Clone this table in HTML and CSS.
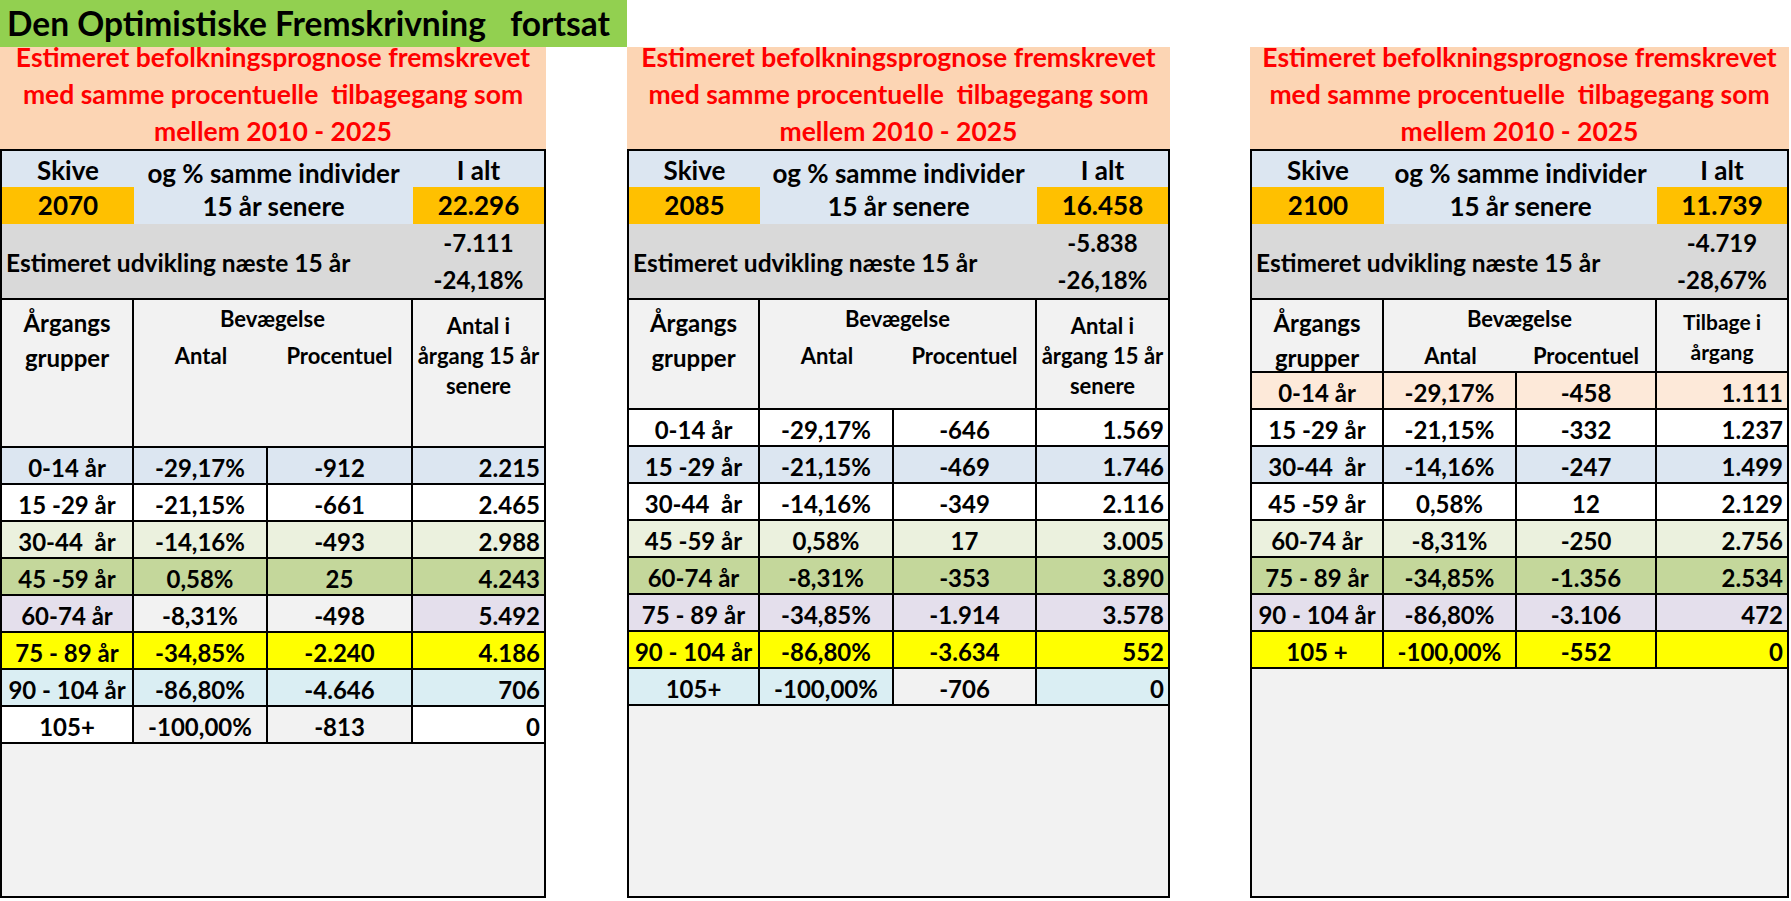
FILE: index.html
```html
<!DOCTYPE html>
<html lang="da">
<head>
<meta charset="utf-8">
<title>Den Optimistiske Fremskrivning fortsat</title>
<link rel="stylesheet" href="styles.css">
</head>
<body>
<div class="page">
  <div class="title-bar">Den Optimistiske Fremskrivning   fortsat</div>
  <div class="panels">

    <section class="panel p1">
      <div class="banner"><div class="banner-text">Estimeret befolkningsprognose fremskrevet<br>med samme procentuelle  tilbagegang som<br>mellem 2010 - 2025</div></div>
      <div class="sheet">
        <div class="top">
          <div class="t-cell">Skive</div>
          <div class="t-mid">og % samme individer<br>15 år senere</div>
          <div class="t-cell">I alt</div>
          <div class="t-cell orange">2070</div>
          <div class="t-cell orange">22.296</div>
        </div>
        <div class="dev">
          <div class="dev-label">Estimeret udvikling næste 15 år</div>
          <div class="dev-vals">-7.111<br>-24,18%</div>
        </div>
        <div class="grid">
          <div class="h h-group">Årgangs<br>grupper</div>
          <div class="h h-move"><div class="h-lbl">Bevægelse</div><div class="h-sub">Antal</div><div class="h-sub">Procentuel</div></div>
          <div class="h h-total">Antal i<br>årgang 15 år<br>senere</div>

          <div class="row bg-blue"><div class="c">0-14 år</div><div class="c">-29,17%</div><div class="c">-912</div><div class="c num">2.215</div></div>
          <div class="row bg-white"><div class="c">15 -29 år</div><div class="c">-21,15%</div><div class="c">-661</div><div class="c num">2.465</div></div>
          <div class="row bg-lgreen"><div class="c">30-44  år</div><div class="c">-14,16%</div><div class="c">-493</div><div class="c num">2.988</div></div>
          <div class="row bg-green"><div class="c">45 -59 år</div><div class="c">0,58%</div><div class="c">25</div><div class="c num">4.243</div></div>
          <div class="row bg-lav"><div class="c">60-74 år</div><div class="c gry">-8,31%</div><div class="c gry">-498</div><div class="c num">5.492</div></div>
          <div class="row bg-yellow"><div class="c">75 - 89 år</div><div class="c">-34,85%</div><div class="c">-2.240</div><div class="c num">4.186</div></div>
          <div class="row bg-aqua"><div class="c">90 - 104 år</div><div class="c">-86,80%</div><div class="c">-4.646</div><div class="c num">706</div></div>
          <div class="row bg-white"><div class="c">105+</div><div class="c gry">-100,00%</div><div class="c gry">-813</div><div class="c num">0</div></div>
        </div>
      </div>
    </section>

    <section class="panel p2">
      <div class="banner"><div class="banner-text">Estimeret befolkningsprognose fremskrevet<br>med samme procentuelle  tilbagegang som<br>mellem 2010 - 2025</div></div>
      <div class="sheet">
        <div class="top">
          <div class="t-cell">Skive</div>
          <div class="t-mid">og % samme individer<br>15 år senere</div>
          <div class="t-cell">I alt</div>
          <div class="t-cell orange">2085</div>
          <div class="t-cell orange">16.458</div>
        </div>
        <div class="dev">
          <div class="dev-label">Estimeret udvikling næste 15 år</div>
          <div class="dev-vals">-5.838<br>-26,18%</div>
        </div>
        <div class="grid">
          <div class="h h-group">Årgangs<br>grupper</div>
          <div class="h h-move"><div class="h-lbl">Bevægelse</div><div class="h-sub">Antal</div><div class="h-sub">Procentuel</div></div>
          <div class="h h-total">Antal i<br>årgang 15 år<br>senere</div>

          <div class="row bg-white"><div class="c">0-14 år</div><div class="c">-29,17%</div><div class="c">-646</div><div class="c num">1.569</div></div>
          <div class="row bg-blue"><div class="c">15 -29 år</div><div class="c">-21,15%</div><div class="c">-469</div><div class="c num">1.746</div></div>
          <div class="row bg-white"><div class="c">30-44  år</div><div class="c">-14,16%</div><div class="c">-349</div><div class="c num">2.116</div></div>
          <div class="row bg-lgreen"><div class="c">45 -59 år</div><div class="c">0,58%</div><div class="c">17</div><div class="c num">3.005</div></div>
          <div class="row bg-green"><div class="c">60-74 år</div><div class="c">-8,31%</div><div class="c">-353</div><div class="c num">3.890</div></div>
          <div class="row bg-lav"><div class="c">75 - 89 år</div><div class="c">-34,85%</div><div class="c">-1.914</div><div class="c num">3.578</div></div>
          <div class="row bg-yellow"><div class="c">90 - 104 år</div><div class="c">-86,80%</div><div class="c">-3.634</div><div class="c num">552</div></div>
          <div class="row bg-aqua"><div class="c">105+</div><div class="c">-100,00%</div><div class="c gry">-706</div><div class="c num">0</div></div>
        </div>
      </div>
    </section>

    <section class="panel p3">
      <div class="banner"><div class="banner-text">Estimeret befolkningsprognose fremskrevet<br>med samme procentuelle  tilbagegang som<br>mellem 2010 - 2025</div></div>
      <div class="sheet">
        <div class="top">
          <div class="t-cell">Skive</div>
          <div class="t-mid">og % samme individer<br>15 år senere</div>
          <div class="t-cell">I alt</div>
          <div class="t-cell orange">2100</div>
          <div class="t-cell orange">11.739</div>
        </div>
        <div class="dev">
          <div class="dev-label">Estimeret udvikling næste 15 år</div>
          <div class="dev-vals">-4.719<br>-28,67%</div>
        </div>
        <div class="grid">
          <div class="h h-group">Årgangs<br>grupper</div>
          <div class="h h-move"><div class="h-lbl">Bevægelse</div><div class="h-sub">Antal</div><div class="h-sub">Procentuel</div></div>
          <div class="h h-total h-short">Tilbage i<br>årgang</div>

          <div class="row bg-peach"><div class="c">0-14 år</div><div class="c">-29,17%</div><div class="c">-458</div><div class="c num">1.111</div></div>
          <div class="row bg-white"><div class="c">15 -29 år</div><div class="c">-21,15%</div><div class="c">-332</div><div class="c num">1.237</div></div>
          <div class="row bg-blue"><div class="c">30-44  år</div><div class="c">-14,16%</div><div class="c">-247</div><div class="c num">1.499</div></div>
          <div class="row bg-white"><div class="c">45 -59 år</div><div class="c">0,58%</div><div class="c">12</div><div class="c num">2.129</div></div>
          <div class="row bg-lgreen"><div class="c">60-74 år</div><div class="c">-8,31%</div><div class="c">-250</div><div class="c num">2.756</div></div>
          <div class="row bg-green"><div class="c">75 - 89 år</div><div class="c">-34,85%</div><div class="c">-1.356</div><div class="c num">2.534</div></div>
          <div class="row bg-lav"><div class="c">90 - 104 år</div><div class="c">-86,80%</div><div class="c">-3.106</div><div class="c num">472</div></div>
          <div class="row bg-yellow"><div class="c">105 +</div><div class="c">-100,00%</div><div class="c">-552</div><div class="c num">0</div></div>
        </div>
      </div>
    </section>

  </div>
</div>
</body>
</html>
```

FILE: styles.css
```css
html, body {
  margin: 0;
  padding: 0;
  background: #ffffff;
}

body {
  font-family: Lato, "Open Sans", "Liberation Sans", sans-serif;
  font-weight: 700;
  color: #000000;
}

.page {
  width: 1791px;
}

.title-bar {
  width: 627px;
  height: 47px;
  box-sizing: border-box;
  padding-left: 7px;
  background: #92D050;
  font-size: 33.5px;
  line-height: 47px;
  white-space: pre;
}

.panels {
  display: flex;
  align-items: flex-start;
  gap: 80px;
}

.panel {
  display: flex;
  flex-direction: column;
  width: var(--w);
}

.p1 { --w: 546px; --c1: 132px; --c2: 134px; --c3: 145px; --hh: 148px; }
.p2 { --w: 543px; --c1: 131px; --c2: 134px; --c3: 143px; --hh: 110px; margin-left: 1px; }
.p3 { --w: 539px; --c1: 132px; --c2: 133px; --c3: 140px; --hh: 73px; }

/* red banner */
.banner {
  height: 102px;
  display: flex;
  flex-direction: column;
  align-items: center;
  background: #FCD5B4;
  color: #FF0000;
  font-size: 26.5px;
  line-height: 37px;
  text-align: center;
  white-space: pre;
}

.banner-text {
  margin-top: -8px;
}

/* sheet */
.sheet {
  height: 749px;
  box-sizing: border-box;
  border: 2px solid #000000;
  background: #F2F2F2;
  display: flex;
  flex-direction: column;
  font-size: 24px;
}

.top {
  display: grid;
  grid-template-columns: var(--c1) calc(var(--c2) + var(--c3)) 1fr;
  grid-template-rows: 36px 37px;
  background: #DCE6F1;
  font-size: 26px;
}

.t-cell {
  text-align: center;
  line-height: 36px;
  padding-top: 1px;
  box-sizing: border-box;
}

.t-cell.orange {
  background: #FFC000;
  line-height: 37px;
  padding-top: 0;
}

.t-mid {
  grid-row: 1 / span 2;
  grid-column: 2;
  text-align: center;
  line-height: 33px;
  padding-top: 6px;
}

.dev {
  height: 74px;
  display: grid;
  grid-template-columns: calc(var(--c1) + var(--c2) + var(--c3)) 1fr;
  background: #D9D9D9;
}

.dev-label {
  align-self: center;
  padding-left: 4px;
  padding-top: 3px;
  font-size: 24.5px;
  white-space: nowrap;
}

.dev-vals {
  text-align: center;
  line-height: 37px;
}

/* data grid */
.grid {
  display: grid;
  grid-template-columns: var(--c1) var(--c2) var(--c3) 1fr;
  border-top: 2px solid #000000;
}

.h {
  height: var(--hh);
  box-sizing: border-box;
  background: #F2F2F2;
  border-bottom: 2px solid #000000;
  text-align: center;
}

.h-group {
  border-right: 2px solid #000000;
  padding-top: 5px;
  line-height: 35px;
}

.h-move {
  grid-column: span 2;
  border-right: 2px solid #000000;
  display: grid;
  grid-template-columns: var(--c2) 1fr;
  align-content: start;
  font-size: 22px;
  padding-top: 4px;
}

.h-lbl {
  grid-column: 1 / -1;
  line-height: 30px;
}

.h-sub {
  margin-top: 4px;
  line-height: 36px;
}

.h-total {
  font-size: 22px;
  line-height: 30px;
  padding-top: 11px;
}

.h-total.h-short {
  font-size: 21px;
  padding-top: 7px;
}

.row {
  display: contents;
}

.c {
  height: 37px;
  box-sizing: border-box;
  border-bottom: 2px solid #000000;
  border-right: 2px solid #000000;
  padding-top: 3px;
  text-align: center;
  line-height: 33px;
  white-space: pre;
}

.c.num {
  border-right: none;
  text-align: right;
  padding-right: 4px;
}

.bg-white > .c { background: #FFFFFF; }
.bg-blue > .c { background: #DCE6F1; }
.bg-lgreen > .c { background: #EBF1DE; }
.bg-green > .c { background: #C4D79B; }
.bg-lav > .c { background: #E4DFEC; }
.bg-yellow > .c { background: #FFFF00; }
.bg-aqua > .c { background: #DAEEF3; }
.bg-peach > .c { background: #FDE9D9; }
.row > .c.gry { background: #F2F2F2; }
```
